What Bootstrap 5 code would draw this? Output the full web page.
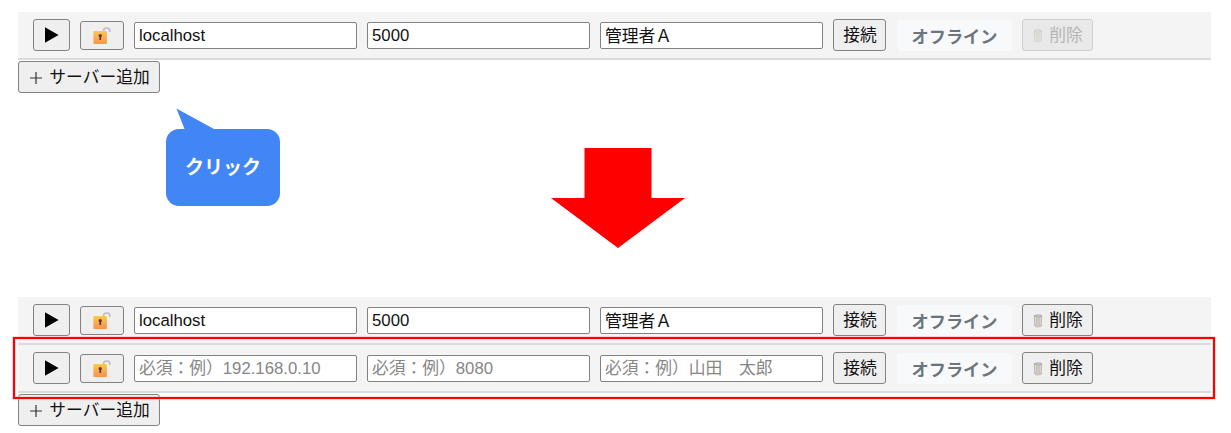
<!DOCTYPE html>
<html lang="ja">
<head>
<meta charset="utf-8">
<meta name="viewport" content="width=device-width, initial-scale=1">
<title>サーバー追加</title>
<link href="https://cdn.jsdelivr.net/npm/bootstrap@5.3.0/dist/css/bootstrap.min.css" rel="stylesheet">
<style>
  body { font: 16.75px/1.2 "Liberation Sans", "Noto Sans CJK JP", sans-serif; color: #111; padding: 12px 20px 0 18px; height: 433px; overflow: hidden; }
  .server-row { height: 48px; padding: 7px 0 0 15px; background: #f4f4f4; border-bottom: 2px solid #d9dbdc; gap: 10px; }
  .ctl { height: 32px; border: 1px solid #828282; border-radius: 3px; background: #efefef; color: #111; padding: 3px 0 0; font-size: inherit; white-space: nowrap; display: flex; align-items: center; justify-content: center; flex: none; }
  .ctl-play { width: 37px; padding-top: 0; }
  .ctl-lock { width: 44px; height: 29px; margin-top: 2px; padding-top: 0; }
  .ctl-connect { width: 53px; padding-left: 1px; }
  .ctl-delete { width: 71px; gap: 6px; padding-left: 1px; }
  .ctl-delete svg { margin-top: -2px; }
  .ctl-delete:disabled { color: #b5b5b5; border-color: #cfcfcf; background: #e9e9e9; }
  .ctl-delete:disabled svg { opacity: .4; }
  .ctl-add { width: 142px; margin-top: 1px; gap: 6px; padding-left: 1px; padding-top: 2px; }
  .ctl-add svg { margin-top: -1px; }
  .field { width: 223px; height: 27px; margin-top: 3px; border: 1px solid #828282; border-radius: 2px; background: #fff; color: #111; padding: 1px 4px 0; flex: none; font-size: inherit; line-height: 1.2; }
  .field-name { padding: 0 4px 1px; }
  .field::placeholder { color: #868686; opacity: 1; }
  .field-name:placeholder-shown { padding: 1px 4px 0; }
  .state { width: 115px; height: 31px; margin: 1px 0 0 1px; border-radius: 4px; background: #f8f9fa; color: #6c757d; font-weight: 700; font-size: 17.2px; display: flex; align-items: center; justify-content: center; flex: none; padding-top: 4px; }
  .stage { height: 204px; padding-top: 15px; }
  .callout { width: 115px; margin-left: 148px; }
  .callout-box { width: 114px; height: 77px; border-radius: 13px; background: #4285f4; color: #fff; font-weight: 700; font-size: 19px; padding-top: 2px; }
  .arrow { margin: 40px 0 0 270px; }
  .marker { inset: -8px -4px -6px -5px; border: 2px solid #f00; box-shadow: 0 0 0 .5px #ffb5b5, inset 0 0 0 .5px #ffb5b5; pointer-events: none; z-index: 1; }
  svg { display: block; flex: none; }
</style>
</head>
<body>
<svg width="0" height="0" class="position-absolute" aria-hidden="true">
  <defs>
    <linearGradient id="gold" x1="0" y1="0" x2="0" y2="1"><stop offset="0" stop-color="#fdc84f"/><stop offset="1" stop-color="#fb9151"/></linearGradient>
    <symbol id="play" viewBox="0 0 14 16"><path d="M0 0.3 13.6 8 0 15.7z" fill="#000"/></symbol>
    <symbol id="lock" viewBox="0 0 18 18">
      <path d="M10.6 4.5V3.4C10.6 1.9 12 1 13.6 1S16.8 2 16.8 3.5V5" fill="none" stroke="#c5b9cc" stroke-width="1.7"/>
      <rect x=".4" y="4" width="13.5" height="13" rx="1" fill="url(#gold)"/>
      <path d="M5.5 8.7a1.7 1.7 0 0 1 3.4 0c0 .8-.5 1.2-.8 1.4v3H6.4v-3c-.5-.3-.9-.7-.9-1.4z" fill="#593b3a"/>
    </symbol>
    <symbol id="bin" viewBox="0 0 10 14">
      <path d="M1.3 2.3h7.4l-.3 9.7C8 13.2 2 13.2 1.6 12z" fill="#dddbd2" stroke="#b5b1ae" stroke-width=".8"/>
      <path d="M3.3 4v8M5 4v8.5M6.8 4v8" stroke="#b3b2a8" stroke-width=".7"/>
      <ellipse cx="5" cy="2" rx="3.9" ry="1.1" fill="#d8d8d8" stroke="#979797" stroke-width=".8"/>
    </symbol>
    <symbol id="plus" viewBox="0 0 14 14"><path d="M7 1v12M1 7h12" stroke="#333" stroke-width="1.2"/></symbol>
  </defs>
</svg>

<section>
  <div class="server-row d-flex align-items-start">
    <button class="ctl ctl-play" aria-label="開始"><svg width="14" height="16"><use href="#play"/></svg></button>
    <button class="ctl ctl-lock" aria-label="ロック"><svg width="18" height="18"><use href="#lock"/></svg></button>
    <input class="field" value="localhost"><input class="field" value="5000"><input class="field field-name" value="管理者Ａ">
    <button class="ctl ctl-connect">接続</button>
    <span class="state">オフライン</span>
    <button class="ctl ctl-delete" disabled><svg width="10" height="14"><use href="#bin"/></svg>削除</button>
  </div>
  <button class="ctl ctl-add"><svg width="14" height="14"><use href="#plus"/></svg>サーバー追加</button>
</section>

<div class="stage d-flex align-items-start">
  <div class="callout">
    <svg width="60" height="21"><path d="M10.5.5 48 21H18.5z" fill="#4285f4"/></svg>
    <div class="callout-box d-flex align-items-center justify-content-center">クリック</div>
  </div>
  <svg class="arrow" width="134" height="100"><path d="M33.5 0h67v50H134L67 100 0 50h33.5z" fill="#f00"/></svg>
</div>

<section>
  <div class="server-row d-flex align-items-start">
    <button class="ctl ctl-play" aria-label="開始"><svg width="14" height="16"><use href="#play"/></svg></button>
    <button class="ctl ctl-lock" aria-label="ロック"><svg width="18" height="18"><use href="#lock"/></svg></button>
    <input class="field" value="localhost"><input class="field" value="5000"><input class="field field-name" value="管理者Ａ">
    <button class="ctl ctl-connect">接続</button>
    <span class="state">オフライン</span>
    <button class="ctl ctl-delete"><svg width="10" height="14"><use href="#bin"/></svg>削除</button>
  </div>
  <div class="position-relative">
    <div class="server-row d-flex align-items-start">
      <button class="ctl ctl-play" aria-label="開始"><svg width="14" height="16"><use href="#play"/></svg></button>
      <button class="ctl ctl-lock" aria-label="ロック"><svg width="18" height="18"><use href="#lock"/></svg></button>
      <input class="field" placeholder="必須：例）192.168.0.10"><input class="field" placeholder="必須：例）8080"><input class="field field-name" placeholder="必須：例）山田　太郎">
      <button class="ctl ctl-connect">接続</button>
      <span class="state">オフライン</span>
      <button class="ctl ctl-delete"><svg width="10" height="14"><use href="#bin"/></svg>削除</button>
    </div>
    <div class="marker position-absolute"></div>
  </div>
  <button class="ctl ctl-add"><svg width="14" height="14"><use href="#plus"/></svg>サーバー追加</button>
</section>
<script src="https://cdn.jsdelivr.net/npm/bootstrap@5.3.0/dist/js/bootstrap.bundle.min.js"></script>
</body>
</html>
